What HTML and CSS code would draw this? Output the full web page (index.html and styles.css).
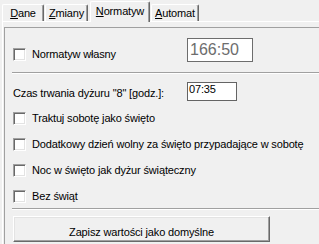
FILE: index.html
```html
<!DOCTYPE html>
<html lang="pl">
<head>
<meta charset="utf-8">
<title>Normatyw</title>
<link rel="stylesheet" href="styles.css">
</head>
<body>
<div class="tabs">
  <div class="tab tab-dane"><u>D</u>ane</div>
  <div class="tab tab-zmiany"><u>Z</u>miany</div>
  <div class="tab tab-normatyw active"><u>N</u>ormatyw</div>
  <div class="tab tab-automat"><u>A</u>utomat</div>
</div>
<div class="panel">
  <div class="frame">
    <div class="grid-row own">
      <div class="check"><span class="box"></span><span>Normatyw własny</span></div>
      <div class="norm">166:50</div>
    </div>
    <div class="sep"></div>
    <div class="grid-row field">
      <span class="lbl">Czas trwania dyżuru "8" [godz.]:</span>
      <div class="input">07:35</div>
    </div>
    <div class="checks">
      <div class="check"><span class="box"></span><span>Traktuj sobotę jako święto</span></div>
      <div class="check"><span class="box"></span><span>Dodatkowy dzień wolny za święto przypadające w sobotę</span></div>
      <div class="check"><span class="box"></span><span>Noc w święto jak dyżur świąteczny</span></div>
      <div class="check"><span class="box"></span><span>Bez świąt</span></div>
    </div>
    <div class="sep sep-bottom"></div>
    <div class="btn">Zapisz wartości jako domyślne</div>
  </div>
</div>
</body>
</html>
```
FILE: styles.css
```css
html, body {
  margin: 0;
  background: #f0f0f0;
}
body {
  font: 11px "Liberation Sans", Arial, sans-serif;
  letter-spacing: -0.15px;
  color: #000;
  width: 319px;
  height: 244px;
  overflow: hidden;
}
u { text-decoration: underline; }

.tabs {
  display: flex;
  align-items: flex-end;
  height: 21px;
  padding-left: 2px;
}
.tab {
  box-sizing: border-box;
  height: 17px;
  border-top: 1px solid #fff;
  border-left: 1px solid #fff;
  border-right: 1px solid #696969;
  box-shadow: inset -1px 0 #a0a0a0;
  border-top-left-radius: 2px;
  border-top-right-radius: 2px;
  text-align: center;
  line-height: 16px;
  white-space: nowrap;
  background: #f0f0f0;
}
.tab-dane { width: 42px; }
.tab-zmiany { width: 43px; margin-left: 1px; }
.tab-normatyw { width: 60px; margin-left: 2px; }
.tab-automat { width: 48px; margin-left: 1px; }
.tab.active {
  height: 21px;
  margin-bottom: -1px;
  padding-top: 1px;
  position: relative;
  z-index: 1;
}

.panel {
  margin-left: 2px;
  border-top: 1px solid #fff;
  border-left: 1px solid #fff;
  padding: 5px 0 0 1px;
}
.frame {
  border-top: 1px solid #a0a0a0;
  border-left: 1px solid #a0a0a0;
  padding: 10px 0 20px 8px;
}

.grid-row {
  display: grid;
  grid-template-columns: 174px auto;
  align-items: start;
}
.own { height: 24px; }
.own .check { margin-top: 10px; }
.norm {
  width: 66px;
  height: 24px;
  box-sizing: border-box;
  border: 1px solid #6d6d6d;
  background: #fff;
  font-size: 16px;
  letter-spacing: 0;
  line-height: 22px;
  color: #6d6d6d;
  padding-left: 2px;
}

.sep {
  margin: 10px 0 0 -1px;
  border-top: 1px solid #a0a0a0;
  border-bottom: 1px solid #fff;
}
.sep-bottom { margin-top: 5px; }

.field { margin-top: 8px; }
.lbl {
  margin-top: 5px;
  line-height: 13px;
  white-space: nowrap;
}
.input {
  width: 50px;
  height: 19px;
  box-sizing: border-box;
  border: 1px solid #646464;
  background: #fff;
  line-height: 12px;
  padding-left: 1px;
}

.checks {
  margin-top: 11px;
  display: flex;
  flex-direction: column;
  gap: 13px;
}
.check {
  display: flex;
  align-items: flex-start;
  gap: 6px;
  height: 13px;
  line-height: 12px;
  white-space: nowrap;
}
.box {
  flex: none;
  width: 13px;
  height: 13px;
  box-sizing: border-box;
  border: 1px solid;
  border-color: #a0a0a0 #fff #fff #a0a0a0;
  box-shadow: inset 1px 1px #696969, inset -1px -1px #e3e3e3;
  background: #fff;
}

.btn {
  margin-top: 6px;
  width: 257px;
  height: 26px;
  box-sizing: border-box;
  border: 1px solid;
  border-color: #fff #696969 #696969 #fff;
  box-shadow: inset -1px -1px #a0a0a0, inset 1px 1px #e3e3e3;
  text-align: center;
  padding-top: 9px;
  line-height: 13px;
}
```
